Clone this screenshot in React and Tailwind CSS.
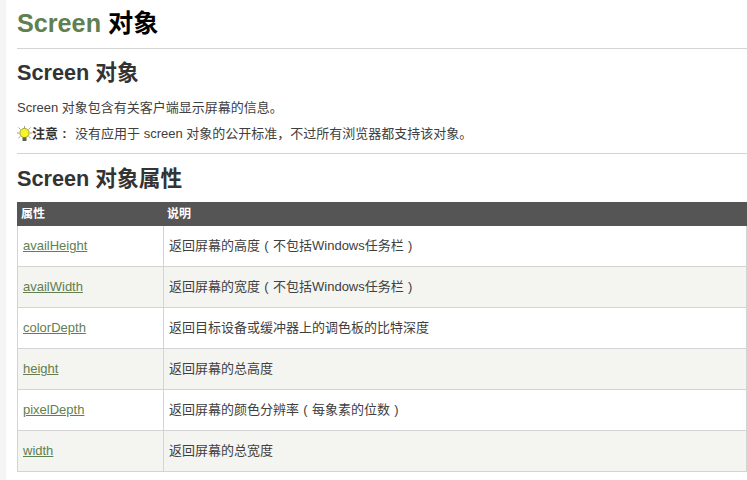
const rows = [
  ["availHeight", <>返回屏幕的高度<Paren c="(" />不包括Windows任务栏<Paren c=")" /></>],
  ["availWidth", <>返回屏幕的宽度<Paren c="(" />不包括Windows任务栏<Paren c=")" /></>],
  ["colorDepth", "返回目标设备或缓冲器上的调色板的比特深度"],
  ["height", "返回屏幕的总高度"],
  ["pixelDepth", <>返回屏幕的颜色分辨率<Paren c="(" />每象素的位数<Paren c=")" /></>],
  ["width", "返回屏幕的总宽度"],
];

// full-width punctuation in the picture sits centred in its cell
function Paren({ c }) {
  return <span className="inline-block w-[13px] text-center">{c}</span>;
}

function Bulb() {
  return (
    <svg width="15" height="16" viewBox="0 0 15 16" className="shrink-0">
      <path d="M7.5 0v2.5M1.5 1.5l2 2M13.5 1.5l-2 2M0 7h2.2M12.8 7h2.2M1.5 12l2-1.5M13.5 12l-2-1.5" stroke="#8f9a9a" strokeWidth="0.9" />
      <circle cx="7.5" cy="7" r="4.6" fill="#f6f526" stroke="#9c9a2c" strokeWidth="0.9" />
      <rect x="5.5" y="11.4" width="4" height="3.6" fill="#5f6152" />
    </svg>
  );
}

export default function App() {
  return (
    <div className="flex h-[480px] w-[747px] overflow-hidden bg-white font-['Liberation_Sans','Noto_Sans_CJK_SC',sans-serif] text-[13px] text-[#404040]">
      <div className="w-[6px] shrink-0 bg-[#f5f5f5]" />
      <div className="min-w-0 flex-1 pl-[11px]">
        <h1 className="h-[49px] border-b border-[#d4d4d4] pt-[4px] text-[25.2px] leading-[38px] font-bold text-black">
          <span className="text-[#617f50]">Screen</span> 对象
        </h1>
        <h2 className="mt-[8px] text-[21.7px] leading-[32px] font-bold text-[#333]">Screen 对象</h2>
        <p className="mt-[9px] h-[20px] leading-[20px]">Screen 对象包含有关客户端显示屏幕的信息。</p>
        <div className="mt-[6px] flex h-[20px] items-center leading-[20px]">
          <Bulb />
          <b className="font-bold text-[#333]">注意<Paren c=":" /></b>
          <span className="ml-[4px]">没有应用于 screen 对象的公开标准，不过所有浏览器都支持该对象。</span>
        </div>
        <div className="mt-[9px] border-t border-[#d4d4d4]" />
        <h2 className="mt-[9px] text-[21.7px] leading-[32px] font-bold text-[#333]">Screen 对象属性</h2>
        <div className="mt-[7px]">
          <div className="flex h-[24px] items-center bg-[#555] text-[12px] font-bold text-white">
            <div className="w-[146px] pl-[4px]">属性</div>
            <div className="pl-[4px]">说明</div>
          </div>
          {rows.map(([name, desc], i) => (
            <div
              key={name}
              className={`flex h-[41px] border-b border-l border-r border-[#d4d4d4] ${i % 2 ? "bg-[#f4f4f1]" : "bg-white"}`}
            >
              <div className="flex w-[146px] shrink-0 items-center border-r border-[#d4d4d4] pl-[5px]">
                <a href="#" className="text-[#617f50] underline">{name}</a>
              </div>
              <div className="flex items-center pl-[5px]"><span>{desc}</span></div>
            </div>
          ))}
        </div>
      </div>
    </div>
  );
}
